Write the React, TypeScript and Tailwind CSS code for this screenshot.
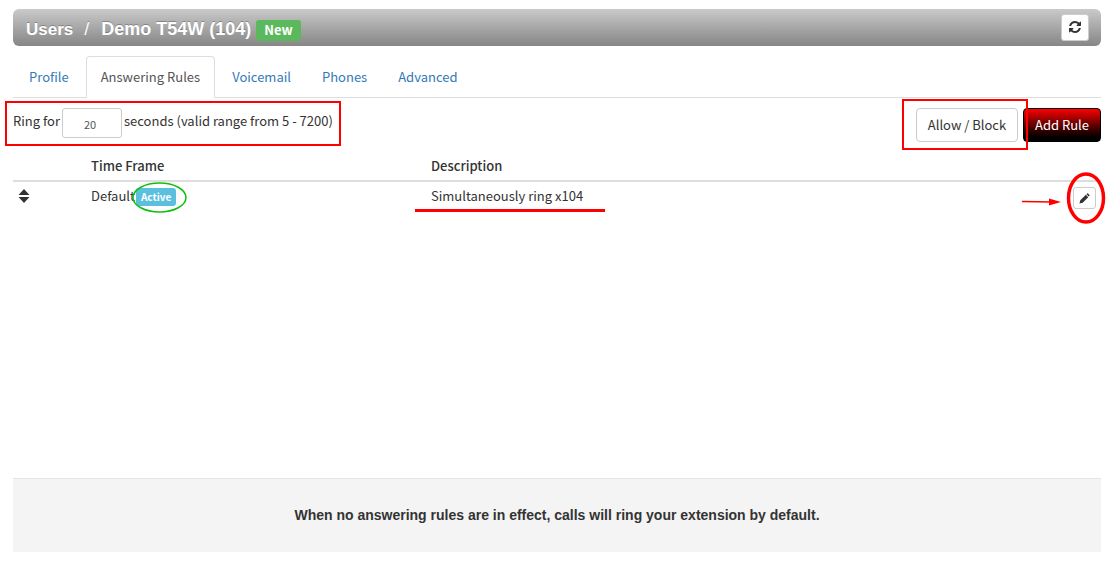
import { useState } from 'react';

const TABS = ['Profile', 'Answering Rules', 'Voicemail', 'Phones', 'Advanced'];

const RULES = [{ id: 1, timeFrame: 'Default', active: true, description: 'Simultaneously ring x104' }];

function RefreshIcon() {
  return (
    <svg viewBox="0 0 1536 1536" className="mb-0.5 size-3" fill="currentColor" aria-hidden="true">
      <path d="M1511 928q0 5-1 7-64 268-268 434.500T764 1536q-146 0-282.500-55T238 1324l-129 129q-19 19-45 19t-45-19-19-45V960q0-26 19-45t45-19h448q26 0 45 19t19 45-19 45l-137 137q71 66 161 102t187 36q134 0 250-65t186-179q11-17 53-117 8-23 30-23h192q13 0 22.500 9.500t9.500 22.500zm25-800v448q0 26-19 45t-45 19h-448q-26 0-45-19t-19-45 19-45l138-138Q969 256 768 256q-134 0-250 65T332 500q-11 17-53 117-8 23-30 23H50q-13 0-22.500-9.500T18 608v-7q65-268 270-434.500T768 0q146 0 284 55.500T1297 212l130-129q19-19 45-19t45 19 19 45z" />
    </svg>
  );
}

function PencilIcon() {
  return (
    <svg viewBox="0 0 12 12" className="size-[11px]" fill="currentColor" aria-hidden="true">
      <path d="M.500 11.500 1.400 8 7.500 1.900 10.100 4.500 4 10.600zM8.100 1.300 8.900.6Q9.400.2 9.900.600L11.400 2.100Q11.800 2.600 11.400 3.100L10.700 3.900z" />
    </svg>
  );
}

function SortHandle() {
  return (
    <svg viewBox="0 0 12 14" className="h-[14px] w-3" fill="currentColor" aria-hidden="true">
      <path d="M6 0 11.500 6H.5zM6 14 .5 8h11z" />
    </svg>
  );
}

function Header() {
  return (
    <header className="flex h-[37px] items-center justify-between rounded-md bg-linear-to-b from-[#cacaca] to-[#868686] pr-3 pl-[13px]">
      <h1 className="flex items-baseline pt-[3px] font-['Liberation_Sans',sans-serif] text-lg font-bold text-white [text-shadow:0_-1px_0_rgba(0,0,0,0.25)]">
        <a href="#users" className="text-[17px]">Users</a>
        <span className="px-[11px] font-normal">/</span>
        <span className="ml-px">Demo T54W (104)</span>
        <span className="ml-[5px] rounded-[3px] bg-[#5cb85c] px-2 pb-px font-['Noto_Sans_CJK_SC',sans-serif] text-[13px] leading-[20px] [text-shadow:none]">
          New
        </span>
      </h1>
      <button
        type="button"
        aria-label="Refresh"
        className="flex h-[27px] w-7 items-center justify-center rounded-[3px] border border-[#ccc] bg-white text-[#333]"
      >
        <RefreshIcon />
      </button>
    </header>
  );
}

function Tabs() {
  return (
    <nav className="mt-[10px] flex gap-[3px] border-b border-[#ddd] pl-0.5">
      {TABS.map((tab) => (
        <a
          key={tab}
          href={`#${tab.toLowerCase().replace(' ', '-')}`}
          className={
            tab === 'Answering Rules'
              ? '-mb-px rounded-t border border-b-white border-[#ddd] bg-white px-[14px] pt-[10px] pb-[9px] text-[#555]'
              : 'px-[14px] pt-[11px] pb-[10px] text-[#337ab7]'
          }
        >
          {tab}
        </a>
      ))}
    </nav>
  );
}

function Toolbar() {
  const [seconds, setSeconds] = useState('20');

  return (
    <div className="flex items-start justify-between pt-[10px]">
      <div className="relative flex h-[30px] items-center">
        <label htmlFor="ring-seconds" className="pb-1">Ring for</label>
        <input
          id="ring-seconds"
          type="text"
          value={seconds}
          onChange={(e) => setSeconds(e.target.value)}
          className="mx-[2px] h-[30px] w-[60px] rounded-[3px] border border-[#ccc] bg-white pt-0.5 pr-1 text-center text-[11px] text-[#555]"
        />
        <span className="pb-1">seconds (valid range from 5 - 7200)</span>
        <span className="pointer-events-none absolute -top-[7px] -right-2 -bottom-2 -left-2 border-2 border-[#f00]" />
      </div>
      <div className="flex gap-[5px]">
        <div className="relative z-10">
          <button type="button" className="h-[34px] w-[102px] rounded border border-[#ccc] bg-white text-[#333]">
            Allow / Block
          </button>
          <span className="pointer-events-none absolute -top-[9px] -right-[10px] -bottom-2 -left-[14px] border-2 border-[#f00]" />
        </div>
        <button
          type="button"
          className="h-[34px] w-[78px] rounded border border-black bg-linear-to-b from-[#f00] to-black text-white"
        >
          Add Rule
        </button>
      </div>
    </div>
  );
}

function RulesTable() {
  return (
    <table className="mt-[10px] w-full table-fixed">
      <thead>
        <tr className="border-b-2 border-[#ddd] text-left">
          <th className="w-[70px]" />
          <th className="w-[340px] px-2 py-1 font-medium">Time Frame</th>
          <th className="px-2 py-1 font-medium">Description</th>
          <th className="w-20" />
        </tr>
      </thead>
      <tbody>
        {RULES.map((rule) => (
          <tr key={rule.id} className="align-top">
            <td className="pt-[7px] pl-[5px]">
              <SortHandle />
            </td>
            <td className="px-2 pt-1">
              <span className="flex items-center">
                {rule.timeFrame}
                {rule.active && (
                  <span className="relative mt-0.5 ml-px flex h-[18px] items-center rounded-[3px] bg-[#5bc0de] px-[5px] text-[10px] font-bold text-white">
                    Active
                    <svg
                      viewBox="0 0 55 31"
                      className="pointer-events-none absolute -top-[6px] -left-1 h-[31px] w-[55px] max-w-none"
                      fill="none"
                      aria-hidden="true"
                    >
                      <ellipse cx="27.500" cy="15.500" rx="26.500" ry="14.500" stroke="#0ec00e" strokeWidth="1.500" />
                    </svg>
                  </span>
                )}
              </span>
            </td>
            <td className="px-2 pt-1">
              <span className="relative">
                {rule.description}
                <span className="pointer-events-none absolute -right-[22px] -bottom-[7px] -left-4 h-[3px] bg-[#f00]" />
              </span>
            </td>
            <td className="pt-[5px] pr-[5px]">
              <span className="relative ml-auto block w-[23px]">
                <button
                  type="button"
                  aria-label="Edit rule"
                  className="flex h-[22px] w-[23px] items-center justify-center rounded-[3px] border border-[#ccc] bg-white text-[#333]"
                >
                  <PencilIcon />
                </button>
                <svg
                  viewBox="0 0 86 54"
                  className="pointer-events-none absolute -top-4 -left-[53px] h-[54px] w-[86px] max-w-none"
                  fill="none"
                  aria-hidden="true"
                >
                  <path d="M2 30.500 32 31" stroke="#f00" strokeWidth="1.500" />
                  <path d="M29 27.500 41 31 29 34.500z" fill="#f00" />
                  <ellipse cx="66" cy="27" rx="17.500" ry="24" stroke="#f00" strokeWidth="3.500" />
                </svg>
              </span>
            </td>
          </tr>
        ))}
      </tbody>
    </table>
  );
}

export default function App() {
  return (
    <div className="flex min-h-screen flex-col bg-white pt-[9px] pr-[19px] pb-[10px] pl-[13px] font-['Noto_Sans_CJK_SC',sans-serif] text-[13px] leading-[20px] text-[#333]">
      <Header />
      <Tabs />
      <main className="flex-1">
        <Toolbar />
        <RulesTable />
      </main>
      <footer className="border-t border-[#e5e5e5] bg-[#f4f4f4] pt-[26px] pb-[27px] text-center font-['Liberation_Sans',sans-serif] text-sm font-bold">
        When no answering rules are in effect, calls will ring your extension by default.
      </footer>
    </div>
  );
}
